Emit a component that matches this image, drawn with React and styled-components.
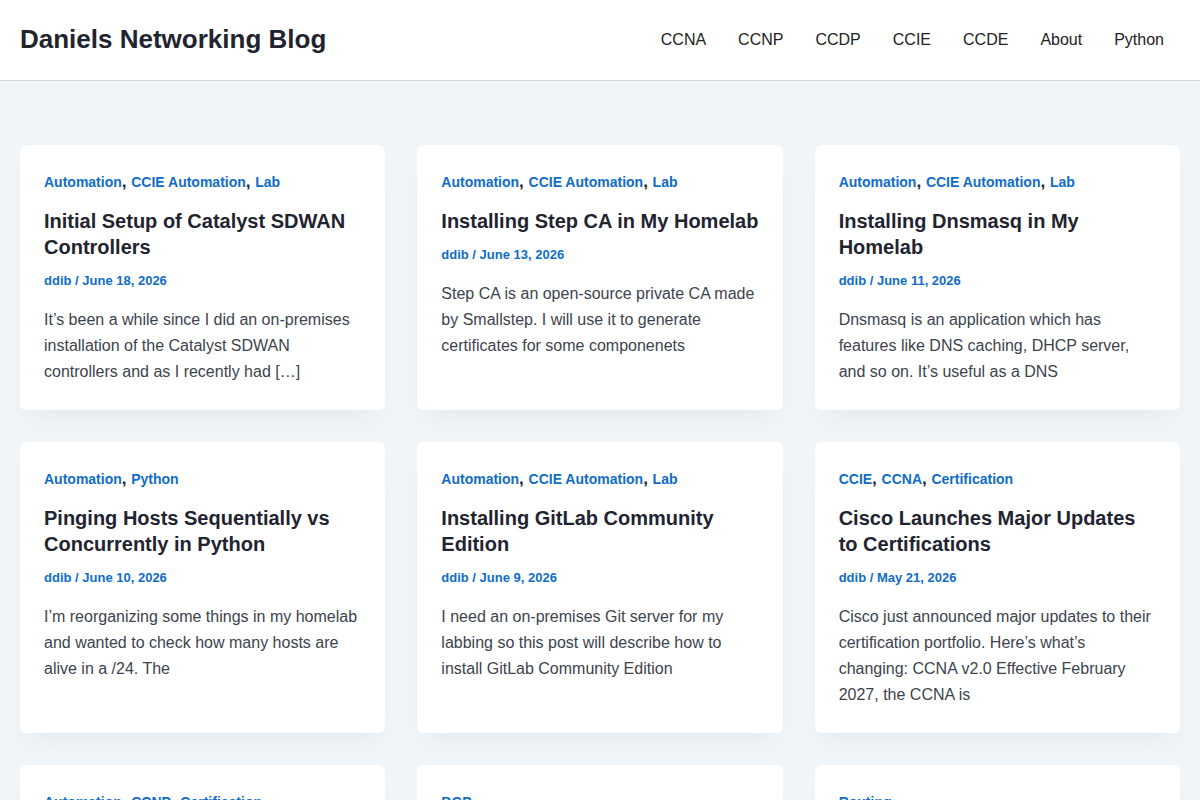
import React from 'react';
import styled, { createGlobalStyle } from 'styled-components';

const GlobalStyle = createGlobalStyle`
  body {
    margin: 0;
    background: #f0f5fa;
    font-family: "Liberation Sans", Arial, sans-serif;
  }
`;

const Header = styled.header`
  display: flex;
  align-items: center;
  justify-content: space-between;
  height: 80px;
  padding: 0 20px;
  background: #fff;
  border-bottom: 1px solid #d3d7de;
`;

const SiteTitle = styled.a`
  margin-top: -2px;
  font-size: 26px;
  font-weight: 700;
  color: #1f2430;
  text-decoration: none;
`;

const Nav = styled.nav`
  display: flex;
`;

const NavLink = styled.a`
  padding: 0 16px;
  font-size: 16px;
  color: #222;
  text-decoration: none;
`;

const Main = styled.main`
  padding: 64px 20px 40px;
`;

const Grid = styled.div`
  display: grid;
  grid-template-columns: repeat(3, 1fr);
  gap: 32px;
`;

const Card = styled.article`
  background: #fff;
  border-radius: 6px;
  padding: 24px 24px 25px;
  box-shadow: 0 15px 25px -10px rgba(0, 0, 0, 0.06);
`;

const Cats = styled.div`
  font-size: 14px;
  font-weight: 700;
  line-height: 26px;
  color: #0f6dc8;

  span {
    font-size: 17px;
    color: #1f2430;
  }
`;

const Title = styled.h2`
  margin: 13px 0 0;
  font-size: 20px;
  line-height: 26px;
  font-weight: 700;
  color: #1f2430;
`;

const Meta = styled.div`
  margin-top: 11px;
  font-size: 13px;
  font-weight: 700;
  line-height: 20px;
  color: #0f6dc8;
`;

const Excerpt = styled.p`
  margin: 16px 0 0;
  font-size: 16px;
  line-height: 26px;
  color: #3d434d;
`;

const posts = [
  {
    cats: ['Automation', 'CCIE Automation', 'Lab'],
    title: 'Initial Setup of Catalyst SDWAN Controllers',
    date: 'June 18, 2026',
    excerpt: 'It’s been a while since I did an on-premises installation of the Catalyst SDWAN controllers and as I recently had […]',
  },
  {
    cats: ['Automation', 'CCIE Automation', 'Lab'],
    title: 'Installing Step CA in My Homelab',
    date: 'June 13, 2026',
    excerpt: 'Step CA is an open-source private CA made by Smallstep. I will use it to generate certificates for some componenets',
  },
  {
    cats: ['Automation', 'CCIE Automation', 'Lab'],
    title: 'Installing Dnsmasq in My Homelab',
    date: 'June 11, 2026',
    excerpt: 'Dnsmasq is an application which has features like DNS caching, DHCP server, and so on. It’s useful as a DNS',
  },
  {
    cats: ['Automation', 'Python'],
    title: 'Pinging Hosts Sequentially vs Concurrently in Python',
    date: 'June 10, 2026',
    excerpt: 'I’m reorganizing some things in my homelab and wanted to check how many hosts are alive in a /24. The',
  },
  {
    cats: ['Automation', 'CCIE Automation', 'Lab'],
    title: 'Installing GitLab Community Edition',
    date: 'June 9, 2026',
    excerpt: 'I need an on-premises Git server for my labbing so this post will describe how to install GitLab Community Edition',
  },
  {
    cats: ['CCIE', 'CCNA', 'Certification'],
    title: 'Cisco Launches Major Updates to Certifications',
    date: 'May 21, 2026',
    excerpt: 'Cisco just announced major updates to their certification portfolio. Here’s what’s changing: CCNA v2.0 Effective February 2027, the CCNA is',
  },
  {
    cats: ['Automation', 'CCNP', 'Certification'],
    title: 'CCNP Automation Updates',
    date: 'May 20, 2026',
    excerpt: '',
  },
  {
    cats: ['BGP'],
    title: 'BGP Notes',
    date: 'May 12, 2026',
    excerpt: '',
  },
  {
    cats: ['Routing'],
    title: 'Routing Notes',
    date: 'May 2, 2026',
    excerpt: '',
  },
];

const navItems = ['CCNA', 'CCNP', 'CCDP', 'CCIE', 'CCDE', 'About', 'Python'];

export default function App() {
  return (
    <>
      <GlobalStyle />
      <Header>
        <SiteTitle href="#">Daniels Networking Blog</SiteTitle>
        <Nav>
          {navItems.map((n) => (
            <NavLink key={n} href="#">{n}</NavLink>
          ))}
        </Nav>
      </Header>
      <Main>
        <Grid>
          {posts.map((p, i) => (
            <Card key={i}>
              <Cats>
                {p.cats.map((c, j) => (
                  <React.Fragment key={c}>
                    {j > 0 && <span>, </span>}
                    {c}
                  </React.Fragment>
                ))}
              </Cats>
              <Title>{p.title}</Title>
              <Meta>ddib / {p.date}</Meta>
              {p.excerpt && <Excerpt>{p.excerpt}</Excerpt>}
            </Card>
          ))}
        </Grid>
      </Main>
    </>
  );
}
